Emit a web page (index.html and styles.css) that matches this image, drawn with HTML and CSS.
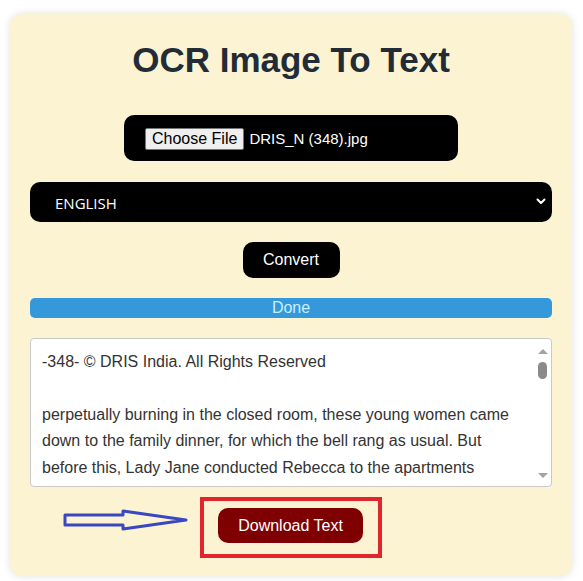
FILE: index.html
```html
<!DOCTYPE html>
<html lang="en">
<head>
<meta charset="utf-8">
<title>OCR Image To Text</title>
<link rel="stylesheet" href="styles.css">
</head>
<body>
<main class="card">
  <h1 class="title">OCR Image To Text</h1>

  <div class="file-box">
    <span class="file-btn">Choose File</span>
    <span class="file-name">DRIS_N (348).jpg</span>
  </div>

  <div class="select">
    <span class="select-value">ENGLISH</span>
    <svg class="chevron" width="10" height="7" viewBox="0 0 10 7"><path d="M1.5 1.5 L5 5 L8.5 1.5" fill="none" stroke="#fff" stroke-width="2" stroke-linecap="round" stroke-linejoin="round"/></svg>
  </div>

  <button class="convert">Convert</button>

  <div class="progress">Done</div>

  <div class="output">
    <div class="output-text">
      <p class="line">-348- © DRIS India. All Rights Reserved</p>
      <p class="line">&nbsp;</p>
      <p class="line">perpetually burning in the closed room, these young women came</p>
      <p class="line">down to the family dinner, for which the bell rang as usual. But</p>
      <p class="line">before this, Lady Jane conducted Rebecca to the apartments</p>
    </div>
    <div class="scrollbar">
      <span class="arrow-up"></span>
      <span class="thumb"></span>
      <span class="spacer"></span>
      <span class="arrow-down"></span>
    </div>
  </div>

  <div class="download-row">
    <svg class="pointer" width="128" height="24" viewBox="0 0 128 24"><polygon points="3,7 61,7 61,3 124,12 61,21 61,17 3,17" fill="none" stroke="#3a47c3" stroke-width="3" stroke-linejoin="round"/></svg>
    <div class="highlight">
      <button class="download">Download Text</button>
    </div>
  </div>
</main>
</body>
</html>
```

FILE: styles.css
```css
* { box-sizing: border-box; }

html, body {
  margin: 0;
  padding: 0;
  background: #ffffff;
}

body {
  font-family: "Liberation Sans", Arial, sans-serif;
  width: 583px;
  height: 581px;
  overflow: hidden;
}

.card {
  margin: 14px 0 0 10px;
  width: 562px;
  height: 562px;
  padding: 26px 20px 0 20px;
  background: #fcf3d3;
  border-radius: 12px;
  box-shadow: 0 0 8px rgba(0, 0, 0, 0.12);
  display: flex;
  flex-direction: column;
}

.title {
  margin: 0;
  font-size: 35px;
  line-height: 40px;
  font-weight: bold;
  text-align: center;
  color: #222c36;
}

.file-box {
  margin: 35px auto 0;
  width: 334px;
  height: 46px;
  background: #000;
  border-radius: 10px;
  display: flex;
  align-items: center;
  padding-left: 21px;
}

.file-btn {
  display: inline-block;
  height: 22px;
  line-height: 20px;
  padding: 0 6px;
  font-size: 16px;
  color: #000;
  background: #efefef;
  border: 1px solid #767676;
  border-radius: 2px;
  margin-top: 1px;
}

.file-name {
  margin-left: 5px;
  font-size: 15px;
  color: #fff;
}

.select {
  margin-top: 21px;
  height: 40px;
  background: #000;
  border-radius: 10px;
  display: flex;
  align-items: center;
  justify-content: space-between;
  padding: 0 6px 0 25px;
}

.select-value {
  font-family: "Open Sans", "Noto Sans", sans-serif;
  font-size: 15px;
  color: #fff;
  margin-top: 2px;
}

.chevron {
  margin-top: -1px;
}

.convert {
  margin: 20px auto 0;
  height: 36px;
  width: 97px;
  padding: 0;
  border: none;
  border-radius: 10px;
  background: #000;
  color: #fff;
  font-family: "Liberation Sans", Arial, sans-serif;
  font-size: 16px;
}

.progress {
  margin-top: 20px;
  height: 20px;
  line-height: 20px;
  background: #3598da;
  border-radius: 5px;
  text-align: center;
  color: #c8f0ff;
  font-size: 16px;
}

.output {
  margin-top: 20px;
  height: 149px;
  background: #fff;
  border: 1px solid #c9c9c9;
  border-radius: 4px;
  display: flex;
  overflow: hidden;
}

.output-text {
  flex: 1;
  padding: 10px 0 0 11px;
  overflow: hidden;
  color: #333;
  font-size: 16px;
  line-height: 26.4px;
}

.line {
  margin: 0;
  white-space: nowrap;
}

.scrollbar {
  width: 17px;
  display: flex;
  flex-direction: column;
  align-items: center;
  padding: 10px 0 8px;
}

.arrow-up {
  width: 0;
  height: 0;
  border-left: 5px solid transparent;
  border-right: 5px solid transparent;
  border-bottom: 5px solid #a3a3a3;
}

.thumb {
  margin-top: 8px;
  width: 9px;
  height: 17px;
  border-radius: 5px;
  background: #8a8a8a;
}

.spacer { flex: 1; }

.arrow-down {
  width: 0;
  height: 0;
  border-left: 5px solid transparent;
  border-right: 5px solid transparent;
  border-top: 5px solid #a3a3a3;
}

.download-row {
  margin-top: 10px;
  display: grid;
  grid-template-columns: 1fr auto 1fr;
  column-gap: 10px;
}

.pointer {
  justify-self: end;
  align-self: start;
  margin-top: 11px;
}

.highlight {
  border: 4px solid #e0252d;
  padding: 7px 15px 11px 14px;
}

.download {
  display: block;
  width: 145px;
  height: 35px;
  padding: 0;
  border: none;
  border-radius: 10px;
  background: #7f0000;
  color: #fff;
  font-family: "Liberation Sans", Arial, sans-serif;
  font-size: 16px;
}
```
